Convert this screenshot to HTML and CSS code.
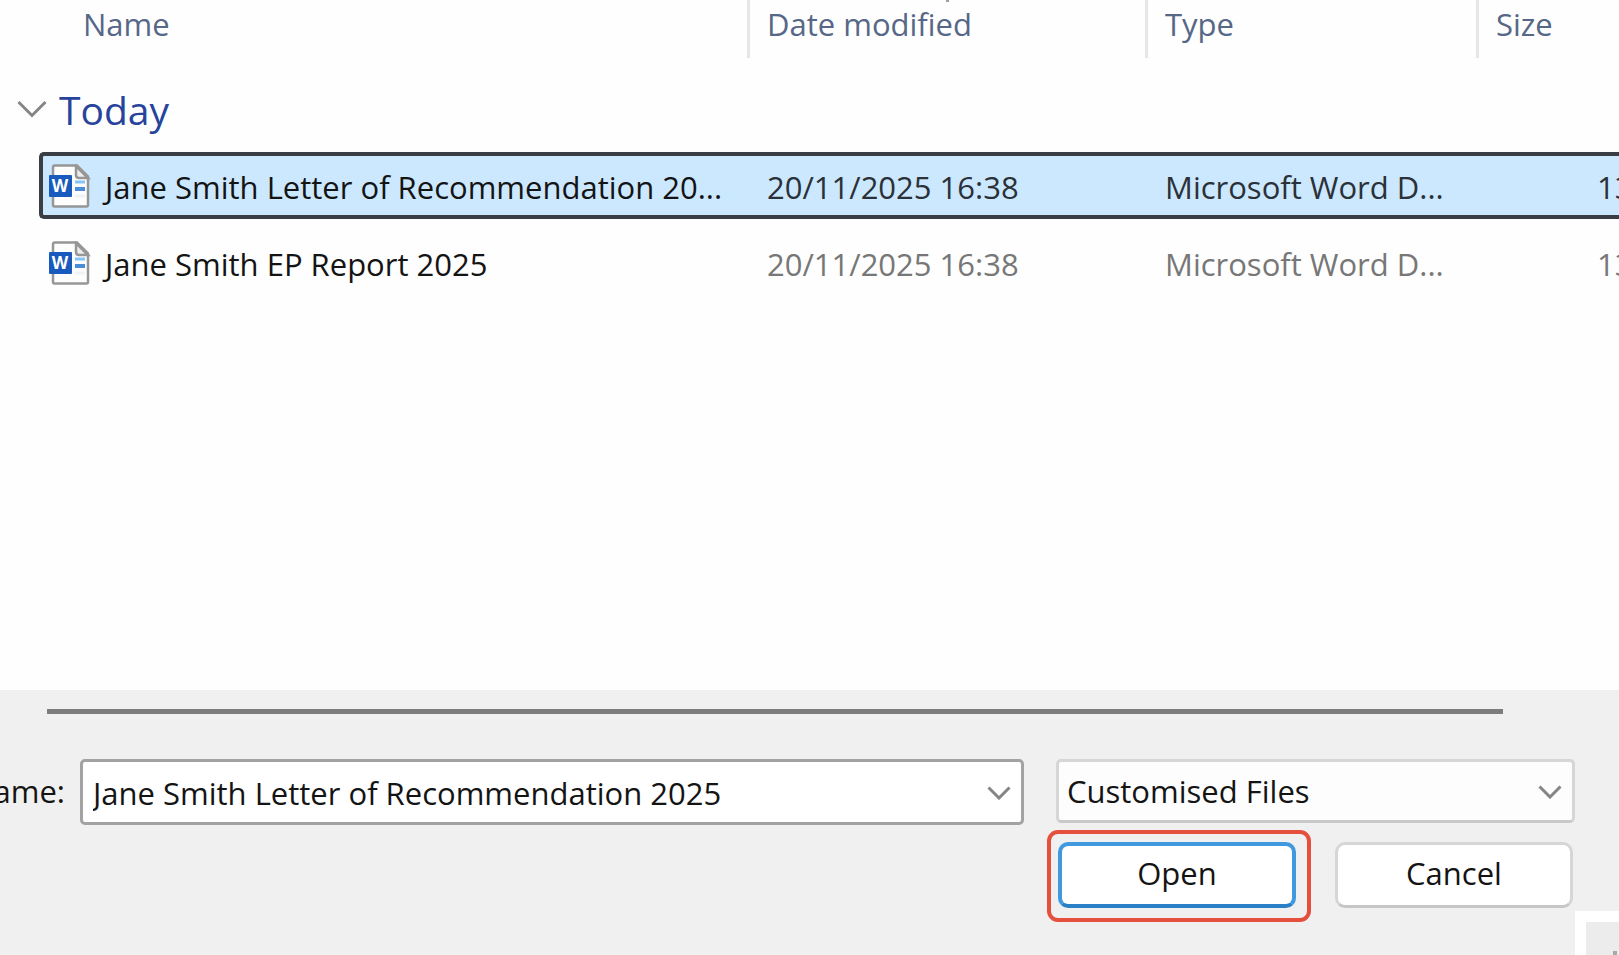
FILE: index.html
```
<!DOCTYPE html>
<html lang="en-GB">
<head>
  <meta charset="UTF-8">
  <meta name="viewport" content="width=device-width, initial-scale=1.0">
  <title>Open</title>
  <link rel="stylesheet" href="styles.css">
</head>
<body>
<svg class="defs" aria-hidden="true">
  <symbol id="word-icon" viewBox="0 0 42 44">
    <path d="M6 1.5h22l11 11V41q0 1.5-1.5 1.5h-32Q4 42.500 4 41V3.500Q4 1.500 6 1.500z" fill="#fdfdfd" stroke="#969696" stroke-width="2.500"/>
    <path d="M27 2v9q0 3 3 3h9z" fill="#ededed" stroke="#969696" stroke-width="2.500"/>
    <path d="M26 18h10" stroke="#83c5f5" stroke-width="3"/>
    <path d="M26 25h10" stroke="#4b8ddd" stroke-width="4"/>
    <path d="M26 32h10" stroke="#eef3fa" stroke-width="3"/>
    <rect x="0" y="11" width="23" height="22" rx="1" fill="#185abd"/>
    <text x="11" y="28" text-anchor="middle" class="word-letter">W</text>
  </symbol>
</svg>

<main class="files">
  <table class="file-table">
    <colgroup>
      <col class="col-indent">
      <col class="col-name">
      <col class="col-date">
      <col class="col-type">
      <col class="col-size">
    </colgroup>
    <thead>
      <tr>
        <td></td>
        <th scope="col" class="head-name">Name</th>
        <th scope="col">Date modified <span class="sort-mark"></span></th>
        <th scope="col">Type</th>
        <th scope="col">Size</th>
      </tr>
    </thead>
    <tbody>
      <tr class="group">
        <th colspan="5" scope="rowgroup">
          <div class="group-title">
            <svg class="group-arrow" viewBox="0 0 30 18"><path d="M1.500 2 15 15.500 28.500 2"/></svg>
            <span>Today</span>
          </div>
        </th>
      </tr>
      <tr class="file selected">
        <td></td>
        <td class="name"><div class="file-name"><svg class="file-icon"><use href="#word-icon"/></svg><span>Jane Smith Letter of Recommendation 20...</span></div></td>
        <td>20/11/2025 16:38</td>
        <td>Microsoft Word D...</td>
        <td class="size">13</td>
      </tr>
      <tr class="file">
        <td></td>
        <td class="name"><div class="file-name"><svg class="file-icon"><use href="#word-icon"/></svg><span>Jane Smith EP Report 2025</span></div></td>
        <td>20/11/2025 16:38</td>
        <td>Microsoft Word D...</td>
        <td class="size">13</td>
      </tr>
    </tbody>
  </table>
</main>

<form class="footer">
  <hr>
  <div class="fields">
    <label for="fileName">ame:</label>
    <div class="combo combo-name">
      <input type="text" id="fileName" value="Jane Smith Letter of Recommendation 2025">
      <svg class="arrow" viewBox="0 0 24 14"><path d="M1.500 1.500 12 12 22.500 1.500"/></svg>
    </div>
    <div class="combo combo-type">
      <select aria-label="File type">
        <option>Customised Files</option>
      </select>
      <svg class="arrow" viewBox="0 0 24 14"><path d="M1.500 1.500 12 12 22.500 1.500"/></svg>
    </div>
  </div>
  <div class="actions">
    <div class="highlight"><button type="button" class="open">Open</button></div>
    <button type="button" class="cancel">Cancel</button>
  </div>
  <div class="corner"></div>
</form>
</body>
</html>
```
FILE: styles.css
```
* {
  box-sizing: border-box;
}
body {
  margin: 0;
  min-height: 100vh;
  display: flex;
  flex-direction: column;
  overflow: hidden;
  background-color: #fefefe;
  color: #141414;
  font-family: "Open Sans", "Noto Sans", sans-serif;
  font-size: 31px;
}
.defs {
  position: absolute;
  width: 0;
  height: 0;
}
.word-letter {
  font: bold 17px "Open Sans", sans-serif;
  fill: #fff;
}
.files {
  flex: 1;
}

/* file list */
.file-table {
  width: 100%;
  table-layout: fixed;
  border-spacing: 0;
  white-space: nowrap;
}
.col-indent {
  width: 39px;
}
.col-name {
  width: 711px;
}
.col-date {
  width: 398px;
}
.col-type {
  width: 331px;
}
th, td {
  padding: 0 0 0 17px;
  text-align: left;
  font-weight: normal;
  overflow: hidden;
}
thead th {
  position: relative;
  height: 58px;
  padding-bottom: 10px;
  border-right: 3px solid #e6e6e6;
  color: #566787;
}
thead th:last-child {
  border-right: none;
}
thead .head-name {
  padding-left: 44px;
}
.sort-mark {
  position: absolute;
  top: 0;
  left: 196px;
  width: 3px;
  height: 2px;
  background-color: #a0a0a0;
}
.group th {
  height: 94px;
  padding-top: 8px;
  font-size: 39px;
  color: #27449c;
}
.group-title {
  display: flex;
  align-items: center;
  gap: 12px;
}
.group-arrow, .arrow {
  fill: none;
  stroke: #858585;
  stroke-width: 3;
}
.group-arrow {
  width: 30px;
  height: 18px;
}
.file td {
  height: 87px;
  padding-top: 3px;
  color: #777;
}
.file td.name {
  padding-top: 0;
  padding-left: 10px;
  color: #141414;
}
.file td.size {
  padding-left: 118px;
}
.file.selected td {
  height: 67px;
  color: #2b3138;
}
.file.selected td:not(:first-child) {
  background-color: #cce8ff;
  border-top: 4px solid #383e43;
  border-bottom: 4px solid #383e43;
}
.file.selected td.name {
  padding-left: 6px;
  border-left: 4px solid #383e43;
  border-radius: 5px 0 0 5px;
  color: #141414;
}
.file-name {
  display: flex;
  align-items: center;
  gap: 14px;
}
.file-name span {
  padding-top: 3px;
}
.file-icon {
  width: 42px;
  height: 44px;
  flex: none;
}

/* bottom bar */
.footer {
  position: relative;
  height: 265px;
  padding-top: 19px;
  background-color: #f0f0f0;
}
hr {
  height: 5px;
  margin: 0 116px 0 47px;
  border: none;
  background-color: #7c7c7c;
}
.fields {
  display: flex;
  align-items: flex-start;
  margin: 45px 44px 0 0;
}
label {
  width: 80px;
  height: 64px;
  padding-right: 15px;
  display: flex;
  align-items: center;
  justify-content: flex-end;
}
.combo {
  position: relative;
}
.combo-name {
  flex: 1;
  margin-right: 32px;
}
.combo-type {
  width: 519px;
}
input, select, button {
  display: block;
  width: 100%;
  height: 66px;
  margin: 0;
  font: inherit;
  color: inherit;
  background-color: #fff;
}
input {
  padding: 2px 50px 0 10px;
  border: 3px solid #a2a2a2;
  border-radius: 5px;
}
select {
  appearance: none;
  height: 64px;
  padding: 0 50px 0 8px;
  border: 3px solid #d6d6d6;
  border-bottom-color: #c9c9c9;
  border-radius: 5px;
  background-color: #fdfdfd;
}
.arrow {
  position: absolute;
  top: 50%;
  right: 13px;
  width: 24px;
  height: 14px;
  margin-top: -6px;
  pointer-events: none;
}
.actions {
  display: flex;
  justify-content: flex-end;
  align-items: flex-start;
  gap: 24px;
  margin: 5px 46px 0 0;
}
.highlight {
  padding: 8px 11px 10px 7px;
  border: 4px solid #e5503c;
  border-radius: 11px;
}
button {
  width: 238px;
  padding: 0 0 4px;
  border-radius: 10px;
}
.open {
  border: 4px solid #4099df;
  border-bottom-color: #2a80c6;
}
.cancel {
  margin-top: 12px;
  border: 3px solid #d6d6d6;
  border-bottom-color: #c6c6c6;
}
/* edge of the window behind */
.corner {
  position: absolute;
  right: 0;
  bottom: 0;
  width: 44px;
  height: 44px;
  border-top: 11px solid #fff;
  border-left: 11px solid #fff;
  background: linear-gradient(#a8a8a8, #a8a8a8) 27px 29px / 4px 4px no-repeat #ececec;
}
```
